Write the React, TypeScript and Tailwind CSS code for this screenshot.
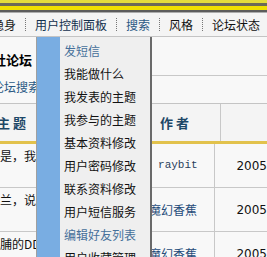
import { Fragment } from "react";

const font = "font-['SimSun','Noto_Sans_CJK_SC',sans-serif]";

const navItems = [
  { label: "隐身", color: "text-[#1a1a1a]" },
  { label: "用户控制面板", color: "text-[#12304e]" },
  { label: "搜索", color: "text-[#2b5a84]" },
  { label: "风格", color: "text-[#111]" },
  { label: "论坛状态", color: "text-[#111]" },
];

const menuItems = [
  { label: "发短信", muted: true },
  { label: "我能做什么" },
  { label: "我发表的主题" },
  { label: "我参与的主题" },
  { label: "基本资料修改" },
  { label: "用户密码修改" },
  { label: "联系资料修改" },
  { label: "用户短信服务" },
  { label: "编辑好友列表", muted: true },
  { label: "用户收藏管理" },
];

const rows = [
  { title: "这是，我", author: "raybit", mono: true, date: "2005" },
  { title: "兰兰，说", author: "魔幻香蕉", date: "2005" },
  { title: "果脯的DD的", author: "魔幻香蕉", date: "2005" },
];

const App = () => {
  return (
    <div
      className={`relative w-[267px] h-[257px] overflow-hidden bg-[#f8f8f8] ${font}`}
    >
      {/* top stripes */}
      <div className="h-[3px] bg-[#e4dc3c]" />
      <div className="h-[3px] bg-[#6c6a58]" />
      <div className="h-[4px] bg-[#f0e000]" />
      <div className="h-[2px] bg-[#5c5c5c]" />
      <div className="h-[1px] bg-[#acacac]" />

      {/* nav bar */}
      <div className="h-[24px] bg-[#f4f4f4] border-b border-[#c4c4c4] flex items-center ml-[-9px] text-[12px] leading-none whitespace-nowrap">
        {navItems.map((item, i) => (
          <Fragment key={item.label}>
            {i > 0 && (
              <span className="h-[13px] border-l border-dotted border-[#777] mx-[8px]" />
            )}
            <span className={`${item.color} px-[1px]`}>{item.label}</span>
          </Fragment>
        ))}
      </div>

      {/* forum title area */}
      <div className="flex h-[66px]">
        <div className="w-[150px] flex flex-col">
          <div className="ml-[-7px] mt-[16px] text-[13px] font-bold text-black leading-none">
            社论坛
          </div>
          <div className="ml-[-8px] mt-[15px] text-[12px] text-[#2b5a84] leading-none">
            论坛搜索
          </div>
        </div>
        <div className="flex-1 h-[39px] border-b border-[#c8c8c8]" />
      </div>

      {/* table header */}
      <div className="flex h-[38px] border-t border-[#c4c4c4] bg-[#f4f4f4] text-[13px] font-bold text-[#1d4767] leading-none">
        <div className="w-[156px] flex items-center ml-[-3px]">主 题</div>
        <div className="w-[67px] flex items-center pl-[7px]">作 者</div>
        <div className="flex-1 border-l border-[#c8c8c8]" />
      </div>
      <div className="h-[3px] bg-[#e2c24c]" />

      {/* rows */}
      {rows.map((r) => (
        <div
          key={r.title}
          className="flex h-[44px] border-b border-[#c8c8c8] text-[12px] leading-none"
        >
          <div className="w-[165px] pt-[6px] ml-[-12px] text-[#111] whitespace-nowrap">
            {r.title}
          </div>
          <div className="w-[67px] flex items-center whitespace-nowrap">
            {r.mono ? (
              <span className="pl-[9px] font-['Liberation_Mono',monospace] text-[11px] text-[#2a3f5c]">
                {r.author}
              </span>
            ) : (
              <span className="text-[#1f4b7a]">{r.author}</span>
            )}
          </div>
          <div className="flex-1 border-l border-[#c8c8c8] flex items-center pl-[21px] text-[#111] font-['DejaVu_Sans',sans-serif] text-[12px]">
            {r.date}
          </div>
        </div>
      ))}

      {/* dropdown menu overlaying page */}
      <div className="absolute left-[36px] top-[37px] w-[116px] h-[240px] flex border-l border-[#a0a0a0] border-r-2 border-r-[#6a6a6a] bg-[#efefef]">
        <div className="w-[23px] bg-[#79ade2]" />
        <div className="flex-1 flex flex-col pt-[2px] pl-[4px] text-[12px] leading-none">
          {menuItems.map((m) => (
            <div
              key={m.label}
              className={`h-[23px] flex items-center whitespace-nowrap ${
                m.muted ? "text-[#46709a]" : "text-[#111]"
              }`}
            >
              {m.label}
            </div>
          ))}
        </div>
      </div>
    </div>
  );
};

export default App;
